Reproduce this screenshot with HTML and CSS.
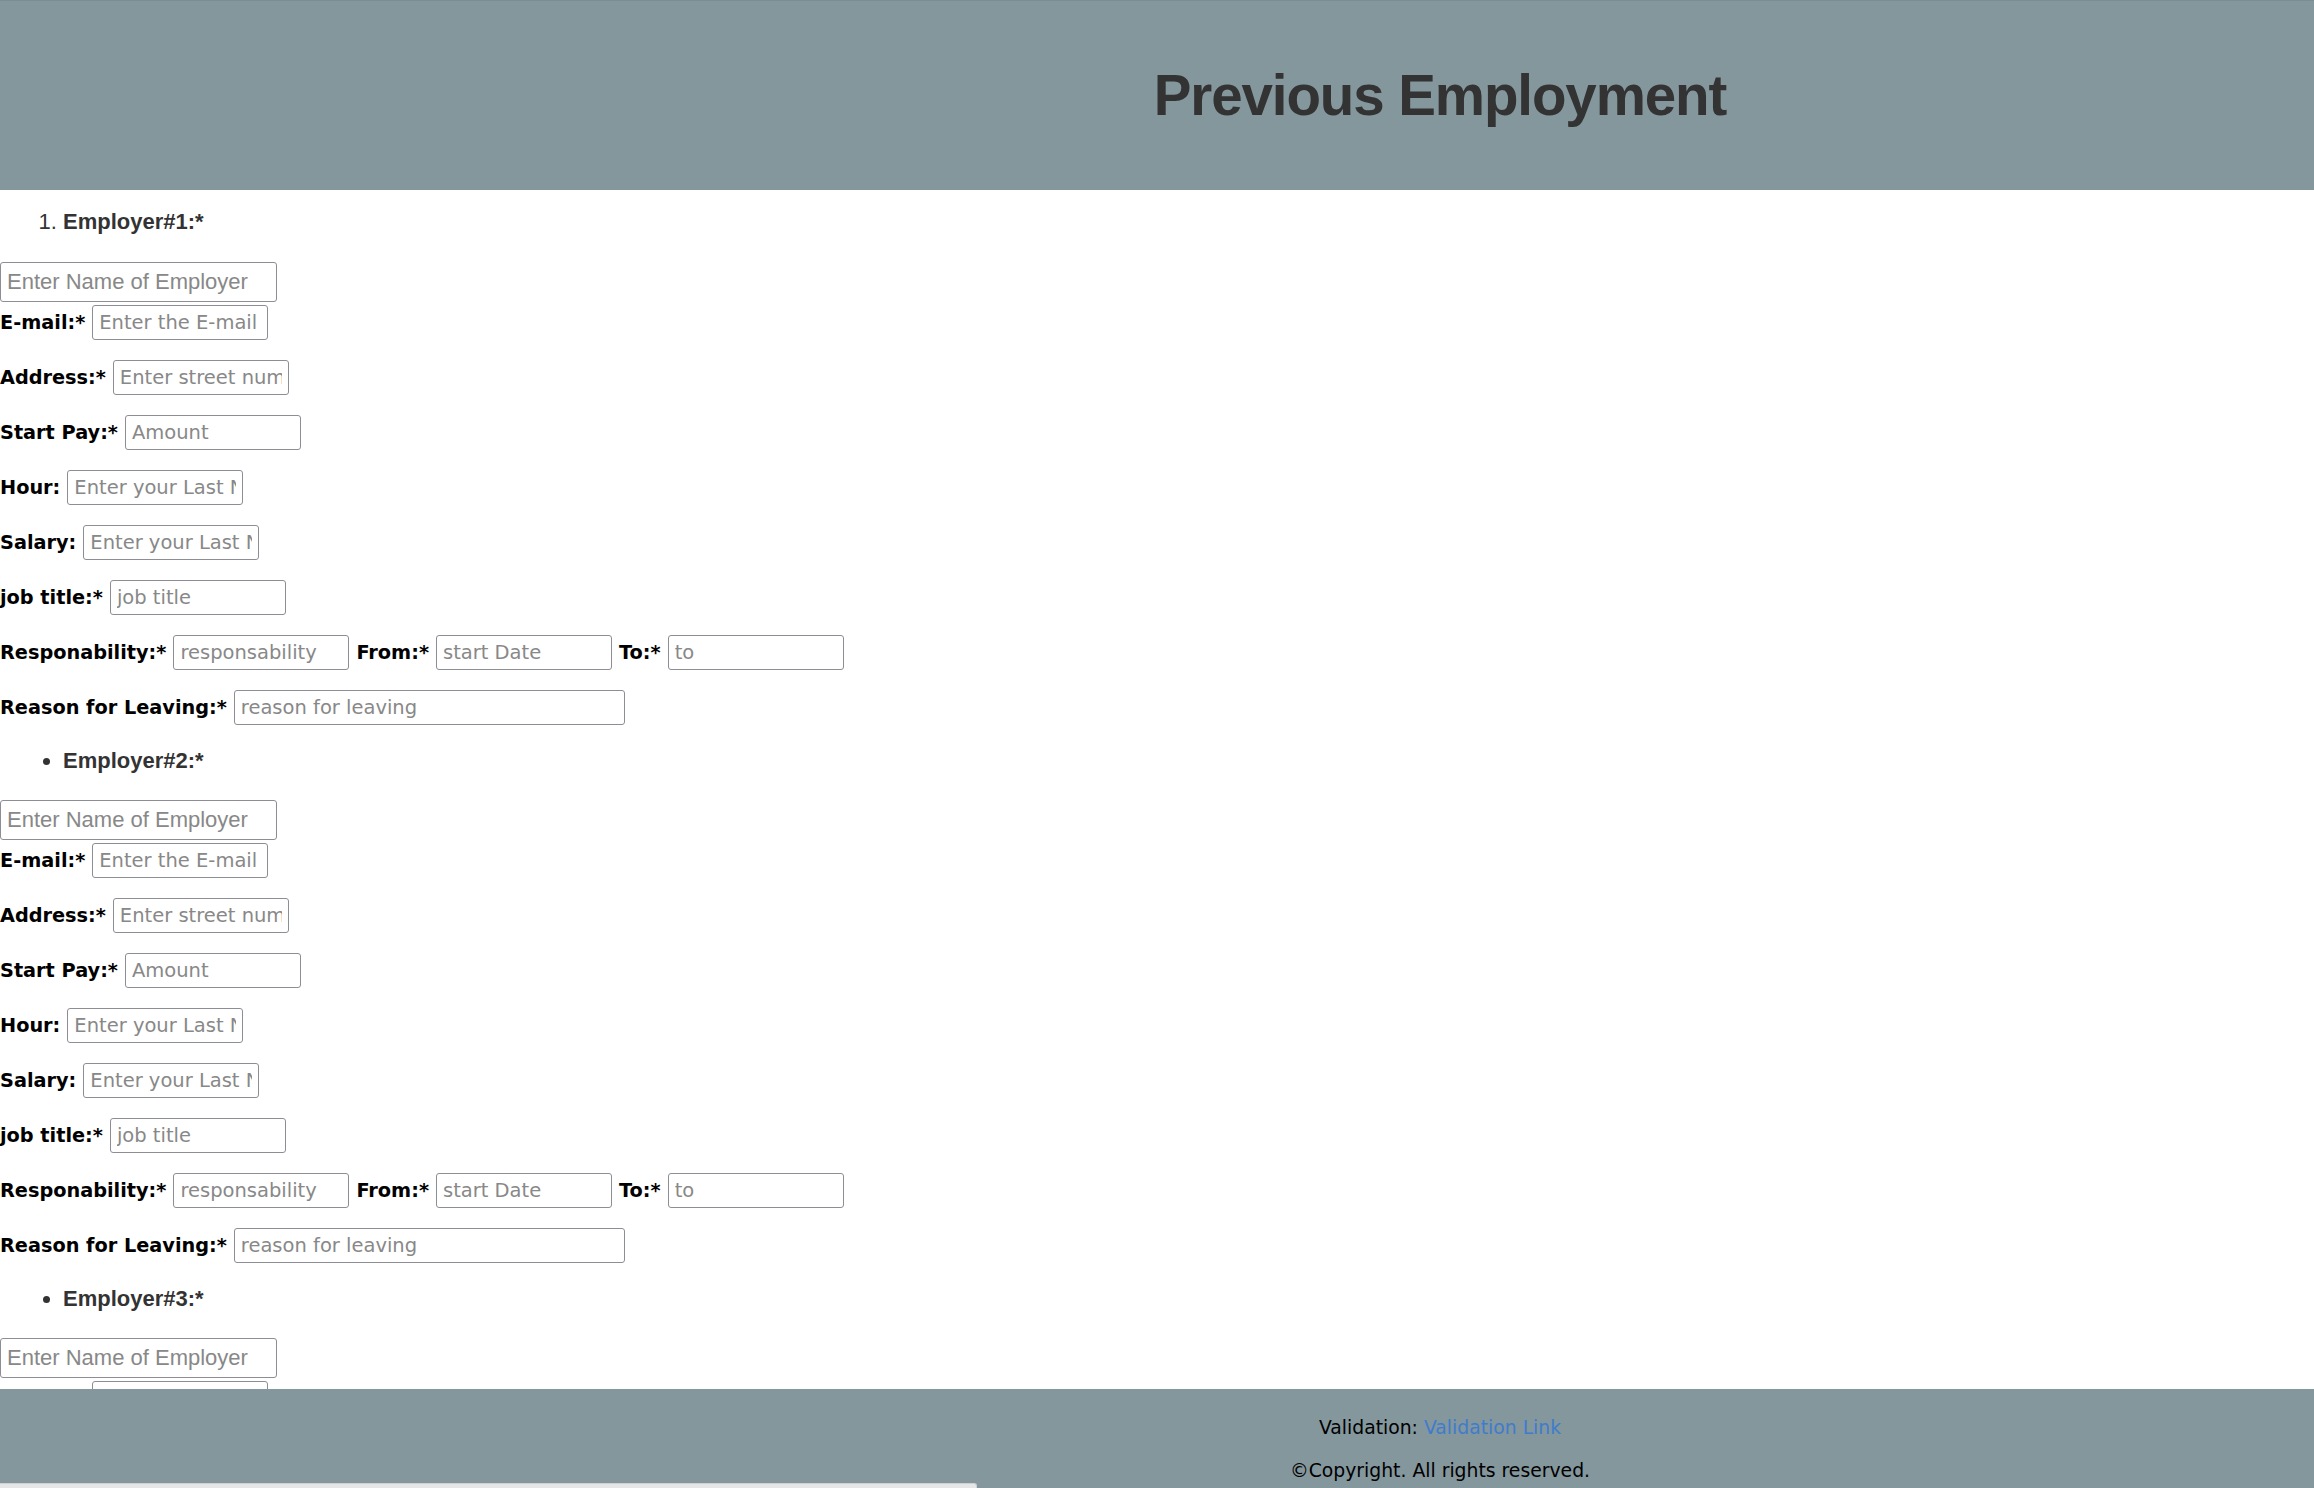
FILE: index.html
```html
<!DOCTYPE html>
<html lang="en">
<head>
<meta charset="utf-8">
<title>Previous Employment</title>
<link rel="stylesheet" href="styles.css">
</head>
<body>
<header class="site-header">
  <h1 class="page-title">Previous Employment</h1>
</header>

<main class="form-area">
  <section class="employer">
    <ol class="employer-list">
      <li class="employer-heading"><strong>Employer#1:*</strong></li>
    </ol>
    <input class="name-input" type="text" placeholder="Enter Name of Employer">
    <div class="field-row first"><label class="field-label">E-mail:*</label><input class="field-input" type="text" placeholder="Enter the E-mail"></div>
    <div class="field-row"><label class="field-label">Address:*</label><input class="field-input" type="text" placeholder="Enter street number"></div>
    <div class="field-row"><label class="field-label">Start Pay:*</label><input class="field-input" type="text" placeholder="Amount"></div>
    <div class="field-row"><label class="field-label">Hour:</label><input class="field-input" type="text" placeholder="Enter your Last Name"></div>
    <div class="field-row"><label class="field-label">Salary:</label><input class="field-input" type="text" placeholder="Enter your Last Name"></div>
    <div class="field-row"><label class="field-label">job title:*</label><input class="field-input" type="text" placeholder="job title"></div>
    <div class="field-row"><label class="field-label">Responability:*</label><input class="field-input" type="text" placeholder="responsability"><label class="field-label">From:*</label><input class="field-input" type="text" placeholder="start Date"><label class="field-label">To:*</label><input class="field-input" type="text" placeholder="to"></div>
    <div class="field-row"><label class="field-label">Reason for Leaving:*</label><input class="field-input wide" type="text" placeholder="reason for leaving"></div>
  </section>

  <section class="employer">
    <ul class="employer-list">
      <li class="employer-heading"><strong>Employer#2:*</strong></li>
    </ul>
    <input class="name-input" type="text" placeholder="Enter Name of Employer">
    <div class="field-row first"><label class="field-label">E-mail:*</label><input class="field-input" type="text" placeholder="Enter the E-mail"></div>
    <div class="field-row"><label class="field-label">Address:*</label><input class="field-input" type="text" placeholder="Enter street number"></div>
    <div class="field-row"><label class="field-label">Start Pay:*</label><input class="field-input" type="text" placeholder="Amount"></div>
    <div class="field-row"><label class="field-label">Hour:</label><input class="field-input" type="text" placeholder="Enter your Last Name"></div>
    <div class="field-row"><label class="field-label">Salary:</label><input class="field-input" type="text" placeholder="Enter your Last Name"></div>
    <div class="field-row"><label class="field-label">job title:*</label><input class="field-input" type="text" placeholder="job title"></div>
    <div class="field-row"><label class="field-label">Responability:*</label><input class="field-input" type="text" placeholder="responsability"><label class="field-label">From:*</label><input class="field-input" type="text" placeholder="start Date"><label class="field-label">To:*</label><input class="field-input" type="text" placeholder="to"></div>
    <div class="field-row"><label class="field-label">Reason for Leaving:*</label><input class="field-input wide" type="text" placeholder="reason for leaving"></div>
  </section>

  <section class="employer">
    <ul class="employer-list">
      <li class="employer-heading"><strong>Employer#3:*</strong></li>
    </ul>
    <input class="name-input" type="text" placeholder="Enter Name of Employer">
    <div class="field-row first"><label class="field-label">E-mail:*</label><input class="field-input" type="text" placeholder="Enter the E-mail"></div>
    <div class="field-row"><label class="field-label">Address:*</label><input class="field-input" type="text" placeholder="Enter street number"></div>
    <div class="field-row"><label class="field-label">Start Pay:*</label><input class="field-input" type="text" placeholder="Amount"></div>
    <div class="field-row"><label class="field-label">Hour:</label><input class="field-input" type="text" placeholder="Enter your Last Name"></div>
    <div class="field-row"><label class="field-label">Salary:</label><input class="field-input" type="text" placeholder="Enter your Last Name"></div>
    <div class="field-row"><label class="field-label">job title:*</label><input class="field-input" type="text" placeholder="job title"></div>
    <div class="field-row"><label class="field-label">Responability:*</label><input class="field-input" type="text" placeholder="responsability"><label class="field-label">From:*</label><input class="field-input" type="text" placeholder="start Date"><label class="field-label">To:*</label><input class="field-input" type="text" placeholder="to"></div>
    <div class="field-row"><label class="field-label">Reason for Leaving:*</label><input class="field-input wide" type="text" placeholder="reason for leaving"></div>
  </section>
</main>

<footer class="site-footer">
  <p class="footer-line">Validation: <a class="footer-link" href="#">Validation Link</a></p>
  <p class="footer-line">&copy;Copyright. All rights reserved.</p>
</footer>

<div class="scroll-thumb"></div>
</body>
</html>
```

FILE: styles.css
```css
html {
  scrollbar-width: none;
}

body {
  margin: 0;
  background: #ffffff;
  font-family: "DejaVu Sans", Verdana, sans-serif;
  color: #000000;
  padding-bottom: 120px;
}

.site-header {
  height: 190px;
  box-sizing: border-box;
  background: #84979d;
  border-top: 1px solid #7b8d93;
  display: flex;
  align-items: center;
  justify-content: center;
  padding-left: 566px;
}

.page-title {
  margin: 0;
  font-family: "Liberation Sans", Arial, Helvetica, sans-serif;
  font-weight: bold;
  font-size: 56.5px;
  letter-spacing: -1.1px;
  color: #333333;
}

.form-area {
  display: block;
}

.employer-list {
  margin: 23px 0 26px;
  padding-left: 63px;
  font-family: "Liberation Sans", Arial, Helvetica, sans-serif;
  font-size: 22px;
  line-height: 26px;
  color: #333333;
}

.employer:first-child .employer-list {
  margin-top: 19px;
  margin-bottom: 27px;
}

.employer-heading strong {
  font-weight: bold;
}

.name-input {
  display: block;
  box-sizing: border-box;
  width: 277px;
  height: 40px;
  margin: 0;
  padding: 0 6px;
  border: 1px solid #8d8d95;
  border-radius: 3px;
  font-family: "Liberation Sans", Arial, Helvetica, sans-serif;
  font-size: 22px;
  background: #ffffff;
}

.name-input::placeholder {
  color: #888888;
}

.field-row {
  display: flex;
  align-items: center;
  gap: 7px;
  height: 35px;
  margin-top: 20px;
}

.field-row.first {
  margin-top: 3px;
}

.field-label {
  font-family: "DejaVu Sans", Verdana, sans-serif;
  font-weight: bold;
  font-size: 19.3px;
  color: #000000;
  white-space: nowrap;
}

.field-input {
  box-sizing: border-box;
  width: 176px;
  height: 35px;
  margin: 0;
  padding: 0 6px;
  border: 1px solid #8d8d95;
  border-radius: 3px;
  font-family: "DejaVu Sans", Verdana, sans-serif;
  font-size: 19.5px;
  background: #ffffff;
}

.field-input.wide {
  width: 391px;
}

.field-input::placeholder {
  color: #888888;
}

.site-footer {
  position: fixed;
  left: 0;
  right: 0;
  bottom: 0;
  height: 99px;
  box-sizing: border-box;
  background: #84979d;
  padding: 17px 0 0 566px;
  text-align: center;
  font-family: "DejaVu Sans", Verdana, sans-serif;
  font-size: 18.8px;
  color: #000000;
}

.footer-line {
  margin: 0;
  line-height: 43px;
}

.footer-link {
  color: #3f7ccc;
  text-decoration: none;
}

.scroll-thumb {
  position: fixed;
  left: 0;
  bottom: 0;
  width: 976px;
  height: 4px;
  background: #e6e6e6;
  border-top: 1px solid #d0d0d0;
  border-right: 1px solid #d0d0d0;
  border-radius: 0 3px 0 0;
}
```
